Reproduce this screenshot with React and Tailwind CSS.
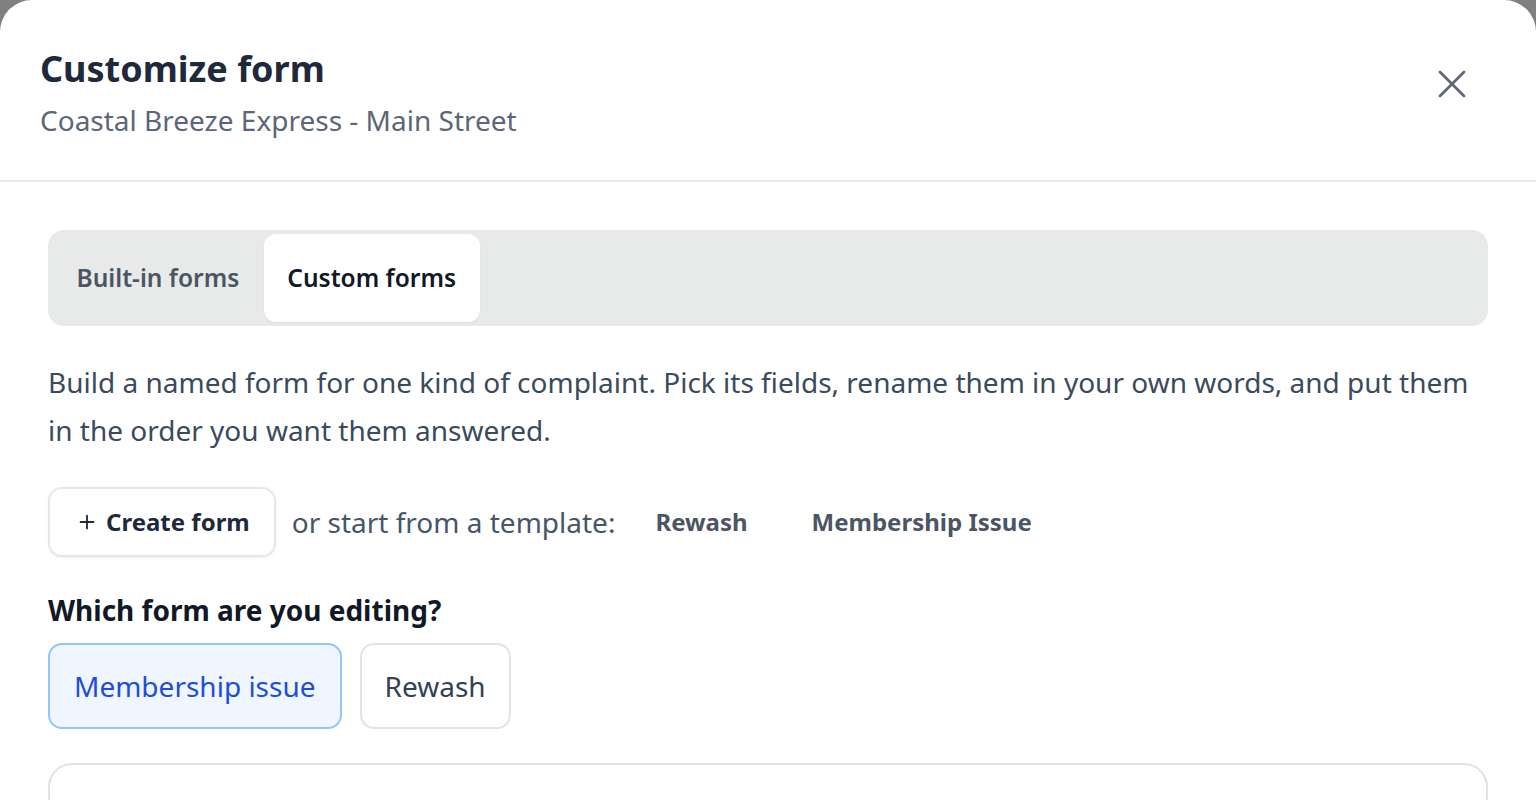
import { Plus } from 'lucide-react';

const font = { fontFamily: '"Noto Sans", "Open Sans", sans-serif' };

const Tabs = () => (
  <div className="flex h-[96px] items-stretch rounded-[16px] bg-[#e8eaea] p-[4px]">
    <button className="rounded-[12px] px-[24.5px] text-[24.5px] font-semibold text-[#4b5563]">
      Built-in forms
    </button>
    <button className="rounded-[12px] bg-white px-[23.5px] text-[24.5px] font-semibold text-[#111827] shadow-[0_1px_2px_rgba(0,0,0,0.05)]">
      Custom forms
    </button>
  </div>
);

export default function App() {
  return (
    <div className="h-[800px] overflow-hidden bg-[#808080]" style={font}>
      <div className="h-full rounded-t-[32px] bg-white">
        {/* HEADER */}
        <div className="flex items-start justify-between border-b-2 border-[#e8e9eb] px-[40px] pb-[40px] pt-[45px]">
          <div>
            <h1 className="text-[36px] font-bold leading-[48px] text-[#1e293b]">
              Customize form
            </h1>
            <p className="mt-[7px] text-[28px] leading-[40px] text-[#5b6776]">
              Coastal Breeze Express - Main Street
            </p>
          </div>
          <button className="mr-[30px] mt-[25px] text-[#5b6776]">
            <svg width="28" height="28" viewBox="0 0 28 28" fill="none" stroke="currentColor" strokeWidth="2.6" strokeLinecap="round">
              <path d="M2 2 26 26M26 2 2 26" />
            </svg>
          </button>
        </div>

        {/* BODY */}
        <div className="px-[48px] pt-[48px]">
          <Tabs />

          <p className="mt-[32px] text-[28px] leading-[48px] text-[#3b4a5c]">
            Build a named form for one kind of complaint. Pick its fields, rename them in your own words, and put them in the order you want them answered.
          </p>

          <div className="mt-[33px] flex items-center">
            <button className="flex h-[70px] items-center gap-[8px] rounded-[14px] border-2 border-[#e5e7eb] bg-white pl-[26px] pr-[24px] text-[24px] font-bold text-[#1e293b] shadow-[0_1px_3px_rgba(0,0,0,0.06)]">
              <Plus className="h-[22px] w-[22px]" strokeWidth={2} />
              Create form
            </button>
            <span className="ml-[16px] text-[28px] text-[#475569]">
              or start from a template:
            </span>
            <button className="ml-[40px] text-[24px] font-bold text-[#4b5563]">
              Rewash
            </button>
            <button className="ml-[64px] text-[24px] font-bold text-[#4b5563]">
              Membership Issue
            </button>
          </div>

          <h2 className="mt-[35px] text-[28px] font-bold leading-[36px] text-[#111827]">
            Which form are you editing?
          </h2>

          <div className="mt-[15px] flex gap-[18px]">
            <button className="h-[86px] rounded-[14px] border-2 border-[#93c5fd] bg-[#eff6ff] px-[24px] text-[28px] text-[#1d4ed8]">
              Membership issue
            </button>
            <button className="h-[86px] rounded-[14px] border-2 border-[#e0e3e7] bg-white px-[23px] text-[28px] text-[#334155]">
              Rewash
            </button>
          </div>

          <div className="mt-[34px] h-[200px] rounded-[24px] border-2 border-[#dfe2e6] bg-white" />
        </div>
      </div>
    </div>
  );
}
